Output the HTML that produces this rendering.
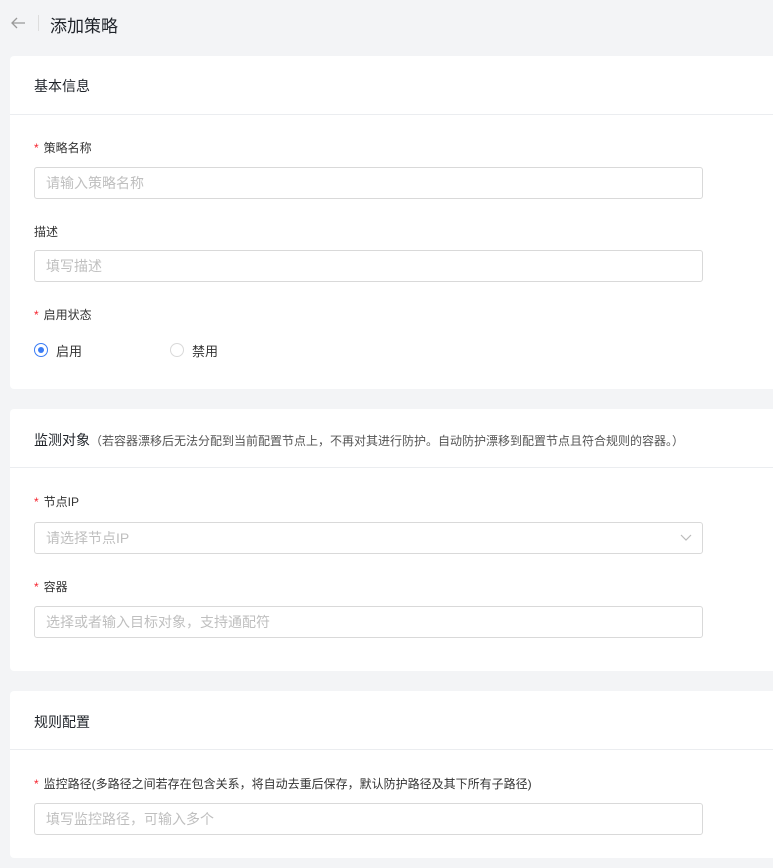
<!DOCTYPE html>
<html><head><meta charset="utf-8"><style>
*{margin:0;padding:0;box-sizing:border-box}
body{width:773px;height:868px;background:#f3f4f6;font-family:"Liberation Sans","Noto Sans CJK SC",sans-serif;position:relative;overflow:hidden;color:#333}
.a{position:absolute}
.card{position:absolute;left:10px;width:780px;background:#fff;border-radius:4px}
.hd{position:absolute;left:0;right:0;top:0;border-bottom:1px solid #ebedf0}
.hd span{position:absolute;left:24px;font-size:14px;color:#1f2329}
.lb{position:absolute;left:24px;font-size:12px;color:#333}
.lb i{color:#f5222d;font-style:normal;margin-right:5px}
.in{position:absolute;left:24px;width:669px;height:32px;border:1px solid #d9d9d9;border-radius:3px;font-size:14px;color:#bfbfbf;padding:6px 11px;line-height:18px}
</style></head><body>
<svg class="a" style="left:10px;top:16px" width="16" height="14" viewBox="0 0 16 14"><path d="M15 7H2M7 2L2 7l5 5" stroke="#999" stroke-width="1.3" fill="none"/></svg>
<div class="a" style="left:38px;top:15px;width:1px;height:16px;background:#ddd"></div>
<div class="a" style="left:50px;top:12px;font-size:17px;color:#1f2329">添加策略</div>

<div class="card" style="top:56px;height:333px">
<div class="hd" style="height:59px"><span style="top:20px">基本信息</span></div>
<div class="lb" style="top:83px"><i>*</i>策略名称</div>
<div class="in" style="top:111px">请输入策略名称</div>
<div class="lb" style="top:167px">描述</div>
<div class="in" style="top:194px">填写描述</div>
<div class="lb" style="top:250px"><i>*</i>启用状态</div>
<div class="a" style="left:24px;top:287px;width:14px;height:14px;border:1px solid #3a7cf5;border-radius:50%"><div style="position:absolute;left:3px;top:3px;width:6px;height:6px;border-radius:50%;background:#3a7cf5"></div></div>
<div class="a" style="left:46px;top:285px;font-size:13px">启用</div>
<div class="a" style="left:160px;top:287px;width:14px;height:14px;border:1px solid #d9d9d9;border-radius:50%"></div>
<div class="a" style="left:182px;top:285px;font-size:13px">禁用</div>
</div>

<div class="card" style="top:409px;height:262px">
<div class="hd" style="height:59px"><span style="top:21px">监测对象<span style="position:static;font-size:12px;color:#555">（若容器漂移后无法分配到当前配置节点上，不再对其进行防护。自动防护漂移到配置节点且符合规则的容器。）</span></span></div>
<div class="lb" style="top:84px"><i>*</i>节点IP</div>
<div class="in" style="top:113px">请选择节点IP<svg style="position:absolute;right:10px;top:11px" width="12" height="8" viewBox="0 0 12 8"><path d="M1 1l5 5 5-5" stroke="#bbb" stroke-width="1.2" fill="none"/></svg></div>
<div class="lb" style="top:169px"><i>*</i>容器</div>
<div class="in" style="top:197px">选择或者输入目标对象，支持通配符</div>
</div>

<div class="card" style="top:691px;height:167px">
<div class="hd" style="height:59px"><span style="top:21px">规则配置</span></div>
<div class="lb" style="top:84px"><i>*</i>监控路径(多路径之间若存在包含关系，将自动去重后保存，默认防护路径及其下所有子路径)</div>
<div class="in" style="top:112px">填写监控路径，可输入多个</div>
</div>
</body></html>
